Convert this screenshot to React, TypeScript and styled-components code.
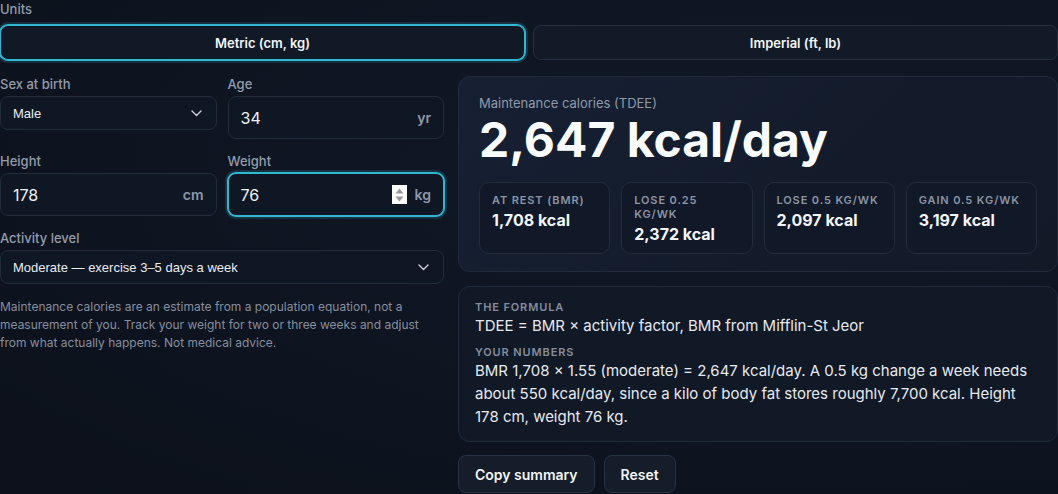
import React from 'react';
import styled, { createGlobalStyle } from 'styled-components';

const GlobalStyle = createGlobalStyle`
  html, body {
    margin: 0;
    padding: 0;
    background: #0e1420;
    color: #e5e7eb;
    font-family: Inter, "Noto Sans", sans-serif;
  }
  * { box-sizing: border-box; }
`;

const ACCENT = '#33b6d3';

const stats = [
  { label: 'At rest (BMR)', value: '1,708 kcal' },
  { label: 'Lose 0.25 kg/wk', value: '2,372 kcal' },
  { label: 'Lose 0.5 kg/wk', value: '2,097 kcal' },
  { label: 'Gain 0.5 kg/wk', value: '3,197 kcal' },
];

const Chevron = () => (
  <ChevronIcon width="11" height="7" viewBox="0 0 11 7">
    <polyline points="1,1 5.5,5.5 10,1" fill="none" stroke="#cbd3df" strokeWidth="1.4" strokeLinecap="round" strokeLinejoin="round" />
  </ChevronIcon>
);

const Spinner = () => (
  <SpinBox>
    <svg width="9" height="6" viewBox="0 0 9 6"><polygon points="4.5,0.5 8.5,5.5 0.5,5.5" fill="#9a9a9a" /></svg>
    <svg width="9" height="6" viewBox="0 0 9 6"><polygon points="0.5,0.5 8.5,0.5 4.5,5.5" fill="#9a9a9a" /></svg>
  </SpinBox>
);

export default function App() {
  return (
    <Page>
      <GlobalStyle />
      <FieldLabel>Units</FieldLabel>
      <Toggle>
        <ToggleButton $active>Metric (cm, kg)</ToggleButton>
        <ToggleButton>Imperial (ft, lb)</ToggleButton>
      </Toggle>

      <Main>
        <LeftColumn>
          <FieldGrid>
            <Field>
              <FieldLabel>Sex at birth</FieldLabel>
              <SelectWrap>
                <Select defaultValue="male">
                  <option value="male">Male</option>
                  <option value="female">Female</option>
                </Select>
                <Chevron />
              </SelectWrap>
            </Field>
            <Field>
              <FieldLabel>Age</FieldLabel>
              <InputBox>
                <NumberInput defaultValue="34" />
                <Unit>yr</Unit>
              </InputBox>
            </Field>
            <Field>
              <FieldLabel>Height</FieldLabel>
              <InputBox>
                <NumberInput defaultValue="178" />
                <Unit>cm</Unit>
              </InputBox>
            </Field>
            <Field>
              <FieldLabel>Weight</FieldLabel>
              <InputBox $focused>
                <NumberInput defaultValue="76" />
                <Spinner />
                <Unit>kg</Unit>
              </InputBox>
            </Field>
          </FieldGrid>

          <Field>
            <FieldLabel>Activity level</FieldLabel>
            <SelectWrap>
              <Select defaultValue="moderate">
                <option value="moderate">Moderate — exercise 3–5 days a week</option>
              </Select>
              <Chevron />
            </SelectWrap>
          </Field>

          <Note>
            Maintenance calories are an estimate from a population equation, not a measurement of you.
            Track your weight for two or three weeks and adjust from what actually happens. Not medical
            advice.
          </Note>
        </LeftColumn>

        <RightColumn>
          <ResultCard>
            <ResultLabel>Maintenance calories (TDEE)</ResultLabel>
            <BigNumber>2,647 kcal/day</BigNumber>
            <StatGrid>
              {stats.map((s) => (
                <StatCard key={s.label}>
                  <StatLabel>{s.label}</StatLabel>
                  <StatValue>{s.value}</StatValue>
                </StatCard>
              ))}
            </StatGrid>
          </ResultCard>

          <FormulaCard>
            <SmallCaps>The formula</SmallCaps>
            <FormulaText>TDEE = BMR × activity factor, BMR from Mifflin-St Jeor</FormulaText>
            <SmallCaps $spaced>Your numbers</SmallCaps>
            <FormulaText>
              BMR 1,708 × 1.55 (moderate) = 2,647 kcal/day. A 0.5 kg change a week needs about 550
              kcal/day, since a kilo of body fat stores roughly 7,700 kcal. Height 178 cm, weight 76 kg.
            </FormulaText>
          </FormulaCard>

          <Actions>
            <ActionButton>Copy summary</ActionButton>
            <ActionButton>Reset</ActionButton>
          </Actions>
        </RightColumn>
      </Main>
    </Page>
  );
}

const Page = styled.div`
  width: 1058px;
  min-height: 494px;
  padding-top: 1px;
  display: flex;
  flex-direction: column;
  background: radial-gradient(ellipse at 75% 35%, #121a28 0%, #0e1420 55%, #0c111b 100%);
`;

const FieldLabel = styled.div`
  font-size: 13px;
  line-height: 16px;
  font-weight: 500;
  color: #939cab;
`;

const Toggle = styled.div`
  display: grid;
  grid-template-columns: minmax(0, 1fr) minmax(0, 1fr);
  gap: 8px;
  margin-top: 8px;
`;

const ToggleButton = styled.button<{ $active?: boolean }>`
  height: 35px;
  border-radius: 8px;
  font-family: Inter, sans-serif;
  font-size: 13px;
  font-weight: 600;
  color: #f1f5f9;
  background: ${(p) => (p.$active ? '#111826' : '#131a27')};
  border: 1px solid ${(p) => (p.$active ? ACCENT : '#252f3f')};
  box-shadow: ${(p) => (p.$active ? `0 0 0 1px ${ACCENT}, 0 0 0 3px rgba(51, 182, 211, 0.18)` : 'none')};
`;

const Main = styled.div`
  display: grid;
  grid-template-columns: 444px minmax(0, 1fr);
  gap: 14px;
  margin-top: 16px;
  align-items: start;
`;

const LeftColumn = styled.div`
  display: flex;
  flex-direction: column;
  gap: 14px;
  min-width: 0;
`;

const FieldGrid = styled.div`
  display: grid;
  grid-template-columns: minmax(0, 1fr) minmax(0, 1fr);
  column-gap: 11px;
  row-gap: 14px;
  align-items: start;
`;

const Field = styled.div`
  display: flex;
  flex-direction: column;
  gap: 4px;
  min-width: 0;
`;

const SelectWrap = styled.div`
  position: relative;
`;

const Select = styled.select`
  appearance: none;
  width: 100%;
  height: 34px;
  padding: 0 36px 0 12px;
  border-radius: 8px;
  border: 1px solid #232c3b;
  background: #101724;
  color: #e8ecf2;
  font-family: "Liberation Sans", Arial, sans-serif;
  font-size: 13px;
  outline: none;
`;

const ChevronIcon = styled.svg`
  position: absolute;
  right: 15px;
  top: 14px;
  pointer-events: none;
`;

const InputBox = styled.div<{ $focused?: boolean }>`
  display: flex;
  align-items: center;
  gap: 8px;
  height: 43px;
  padding: 0 12px;
  border-radius: 8px;
  background: #101724;
  border: 1px solid ${(p) => (p.$focused ? ACCENT : '#232c3b')};
  box-shadow: ${(p) => (p.$focused ? `0 0 0 1px ${ACCENT}, 0 0 0 3px rgba(51, 182, 211, 0.18)` : 'none')};
`;

const NumberInput = styled.input`
  flex: 1;
  width: 0;
  min-width: 0;
  border: none;
  background: transparent;
  outline: none;
  padding: 0;
  color: #eef1f6;
  font-family: Inter, sans-serif;
  font-size: 16px;
`;

const SpinBox = styled.span`
  width: 15px;
  height: 19px;
  background: #ffffff;
  display: flex;
  flex-direction: column;
  align-items: center;
  justify-content: center;
  gap: 2px;
`;

const Unit = styled.span`
  font-size: 14px;
  font-weight: 600;
  color: #8e97a8;
`;

const Note = styled.p`
  margin: 0;
  font-size: 12px;
  line-height: 18px;
  color: #858e9e;
`;

const RightColumn = styled.div`
  display: flex;
  flex-direction: column;
  gap: 14px;
`;

const ResultCard = styled.div`
  padding: 18px 20px 17px;
  border-radius: 12px;
  border: 1px solid #212b3b;
  background: linear-gradient(135deg, #172033 0%, #131b2b 60%, #121a28 100%);
`;

const ResultLabel = styled.div`
  font-size: 13px;
  line-height: 16px;
  color: #8f99aa;
`;

const BigNumber = styled.div`
  margin-top: 2px;
  font-size: 48px;
  line-height: 53px;
  font-weight: 700;
  color: #f8fafc;
`;

const StatGrid = styled.div`
  display: grid;
  grid-template-columns: repeat(4, minmax(0, 1fr));
  gap: 11px;
  margin-top: 16px;
`;

const StatCard = styled.div`
  padding: 10px 12px 9px;
  border-radius: 10px;
  border: 1px solid #222c3c;
  background: #111827;
  display: flex;
  flex-direction: column;
  gap: 3px;
`;

const StatLabel = styled.div`
  font-size: 11px;
  line-height: 14px;
  font-weight: 600;
  letter-spacing: 0.08em;
  text-transform: uppercase;
  color: #8b94a5;
`;

const StatValue = styled.div`
  font-size: 16px;
  line-height: 20px;
  font-weight: 700;
  color: #f1f5f9;
`;

const FormulaCard = styled.div`
  padding: 13px 16px 13px;
  border-radius: 12px;
  border: 1px solid #212b3b;
  background: #111826;
`;

const SmallCaps = styled.div<{ $spaced?: boolean }>`
  margin-top: ${(p) => (p.$spaced ? '8px' : '0')};
  font-size: 11px;
  line-height: 14px;
  font-weight: 600;
  letter-spacing: 0.08em;
  text-transform: uppercase;
  color: #848d9d;
`;

const FormulaText = styled.div`
  font-size: 15px;
  line-height: 23px;
  color: #e6eaf0;
`;

const Actions = styled.div`
  display: flex;
  gap: 9px;
  margin-top: -1px;
`;

const ActionButton = styled.button`
  height: 38px;
  padding: 0 16px;
  border-radius: 8px;
  border: 1px solid #283243;
  background: #151c2a;
  color: #f1f5f9;
  font-family: Inter, sans-serif;
  font-size: 14px;
  font-weight: 600;
`;
